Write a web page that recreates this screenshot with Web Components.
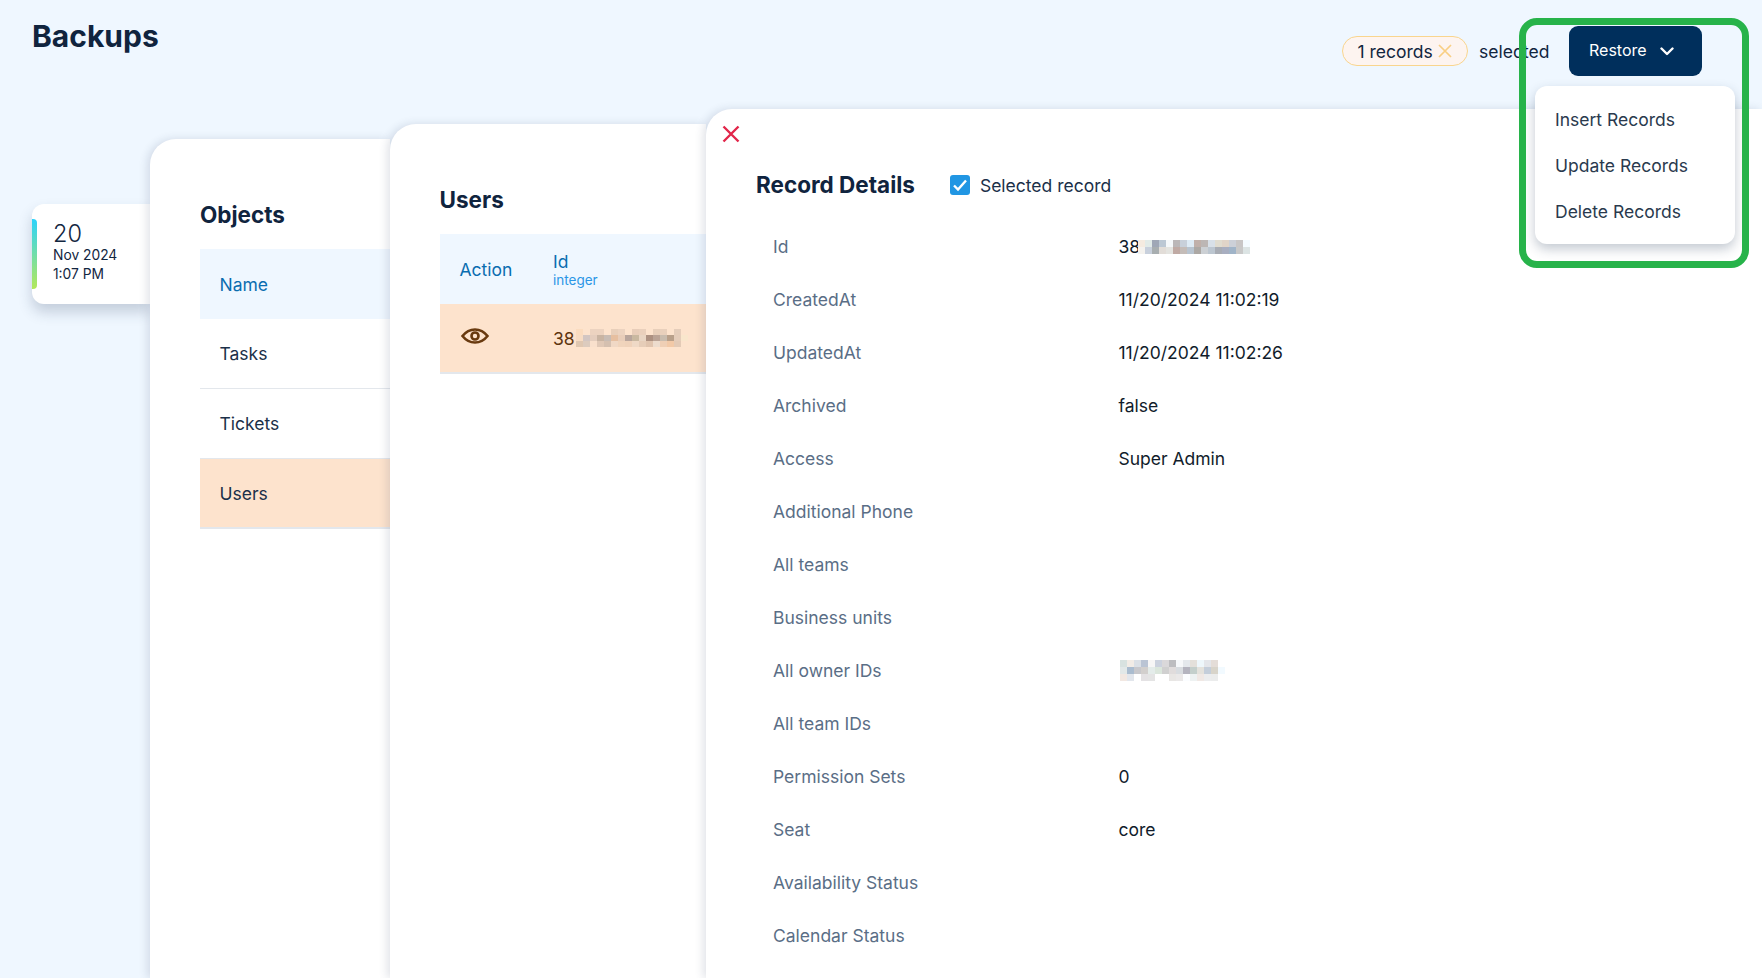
<!DOCTYPE html>
<html><head><meta charset="utf-8"><title>Backups</title>
<style>
html,body{margin:0;padding:0;height:100%}
body{background:#eff7ff;font-family:Inter,"Liberation Sans",sans-serif;color:#12263f;overflow:hidden}
</style></head><body>
<backups-page>
  <page-header slot="header"></page-header>
  <backup-date></backup-date>
  <objects-panel></objects-panel>
  <users-panel></users-panel>
  <record-panel></record-panel>
  <restore-menu></restore-menu>
</backups-page>
<script>
function def(name, html, setup){
  customElements.define(name, class extends HTMLElement{
    constructor(){super();this.attachShadow({mode:'open'}).innerHTML=html;}
    connectedCallback(){ if(setup) setup(this); }
  });
}
def('backups-page',`<style>
:host{display:block;position:relative;width:1762px;height:978px;overflow:hidden}
.main{display:flex;align-items:stretch;height:869px;padding-left:32px}
</style>
<slot name="header"></slot>
<div class="main"><slot></slot></div>`);

def('page-header',`<style>
:host{display:flex;box-sizing:border-box;height:109px;padding:16px 60px 0 32px;justify-content:space-between;align-items:flex-start}
h1{margin:0;font:700 30px/40px Inter,sans-serif;color:#10243e}
.right{display:flex;align-items:center;height:60px;margin-top:5px}
.pill{display:flex;align-items:center;box-sizing:border-box;height:30px;width:126px;padding-left:14.500px;border:1px solid #f9d58e;border-radius:15px;background:#fdf4f0;font-size:17.5px;color:#12263f}
.pill svg{margin-left:5.500px}
.sel{margin-left:11px;font-size:17.5px;color:#12263f;width:90px;margin-right:0}
.btn{display:flex;align-items:center;box-sizing:border-box;width:133px;height:50px;padding-left:20px;border-radius:9px;background:#002f5c;color:#fff;font-size:16px;}
.btn b{font-weight:400;position:relative;top:-1px}
.btn svg{margin-left:13px}
</style>
<h1>Backups</h1>
<div class="right">
 <span class="pill">1 records<svg width="14" height="14" viewBox="0 0 14 14" fill="none" stroke="#f9cf84" stroke-width="1.7"><path d="M1 1l12 12M13 1L1 13"/></svg></span>
 <span class="sel">selected</span>
 <span class="btn"><b>Restore</b><svg width="14" height="9" viewBox="0 0 14 9" fill="none" stroke="#fff" stroke-width="2.4" stroke-linecap="round" stroke-linejoin="round"><path d="M1.5 1.5L7 7l5.500-5.500"/></svg></span>
</div>`);

def('backup-date',`<style>
:host{display:block;box-sizing:border-box;position:relative;width:118px;height:100px;margin-top:95px;padding:18px 0 0 21px;background:#fff;border-radius:12px 0 0 12px;box-shadow:0 8px 14px rgba(40,60,90,.22);overflow:visible}
.bar{position:absolute;left:0;top:15px;width:5px;height:70px;border-radius:0 4px 4px 0;background:linear-gradient(#2cd3fb,#b3e85a)}
.d{font-size:23.500px;line-height:24px;color:#12263f;font-weight:300}
.s{font-size:13.800px;line-height:18.500px;color:#12263f}
</style>
<div class="bar"></div><div class="d">20</div><div class="s">Nov 2024</div><div class="s">1:07 PM</div>`);

def('objects-panel',`<style>
:host{display:block;box-sizing:border-box;position:relative;width:240px;margin-top:30px;padding:50px 0 0 50px;background:#fff;border-radius:26px 0 0 0;box-shadow:-3px 0 8px rgba(40,60,90,.14)}
h2{margin:0 0 18px;font:700 22.500px/52px Inter,sans-serif;color:#10243e;height:42px}
.r{box-sizing:border-box;height:70px;display:flex;align-items:center;padding-left:19.500px;font-size:17.5px;color:#1b3049;border-bottom:1px solid #e3e7ec}
.r:first-of-type{background:#eff7ff;color:#0a6db0;border:0}
.r.tick{height:69px;border:0}
.r.last{height:71px;background:#fde3cd;border-top:1px solid #e3e7ec;border-bottom:2px solid #e3e7ec}
</style>
<h2>Objects</h2>
<div class="r">Name</div><div class="r">Tasks</div><div class="r tick">Tickets</div><div class="r last">Users</div>`);

def('pixel-mosaic',`<style>
:host{display:inline-grid;grid-auto-rows:var(--h,7px);grid-auto-columns:7px;vertical-align:top}
i{display:block}
</style><div id="g" style="display:contents"></div>`, el=>{
  const g=el.shadowRoot.getElementById('g');
  el.getAttribute('data').split('|').forEach((row,y)=>row.trim().split(/\s+/).forEach((c,x)=>{
    const i=document.createElement('i');
    i.style.gridArea=(y+1)+'/'+(x+1);
    if(c!=='-') i.style.background='#'+c;
    g.appendChild(i);
  }));
});

def('users-panel',`<style>
:host{display:block;box-sizing:border-box;position:relative;width:316px;margin-top:15px;padding:50px 0 0 50px;background:#fff;border-radius:26px 0 0 0;box-shadow:-3px 0 8px rgba(40,60,90,.14)}
h2{margin:0;font:700 22.500px/52px Inter,sans-serif;color:#10243e;height:60px;margin-left:-.5px}
.h,.b{display:flex;align-items:center;box-sizing:border-box}
.h{height:70px;background:#eff7ff;color:#0a6db0;font-size:17.5px}
.b{height:70px;background:#fde3cd;color:#5e3510;border-bottom:2px solid #e3e7ec;font-size:17.5px}
.c1{width:113px;padding-left:19.500px;box-sizing:border-box}
.id{line-height:20px;padding-top:2px}.id small{display:block;font-size:13.500px;line-height:17px;color:#2b96e6}
.val{display:flex;align-items:center}
pixel-mosaic{--h:6.300px;margin-left:1px}
</style>
<h2>Users</h2>
<div class="h"><div class="c1">Action</div><div class="id">Id<small>integer</small></div></div>
<div class="b"><div class="c1" style="height:30px"><svg width="30" height="20" viewBox="0 0 30 20" fill="none" stroke="#693a0f" style="display:block;margin-top:3px"><path stroke-width="2.600" d="M2.500 10C6 5.500 10 3.500 15 3.500S24 5.500 27.500 10C24 14.500 20 16.500 15 16.500S6 14.500 2.500 10z"/><circle cx="15" cy="10" r="3.500" stroke-width="2.600"/></svg></div>
<div class="val">38<pixel-mosaic data="fbdcbf - ecd3c0 ecd3c0 - e8cfba ecd3c0 - e8cdb9 ead0bc - e8cfba e9d0bc - e5cdba|f8dcc3 d3c6c2 e4cdbd c9b4a2 c8bcb4 e6bfa0 e8cdb9 b8a59c c9b8a0 e9d5c3 ad9181 bba496 c9bcae b9a08a e5cdba f9e6cc|dfc7b1 dccbbe f9e0cc e0c8b6 d5c0b0 f0d8c5 f0d4bc efd2ba efd9c6 e6cdb8 e0c4ae eddccd efcfb5 f2c9a7 e3cab6"></pixel-mosaic></div></div>`);

def('detail-row',`<style>
:host{display:grid;grid-template-columns:345.500px 1fr;height:53px;align-items:center;font-size:17.5px}
.l{color:#5a6e86}
.v{color:#111c2b;display:flex;align-items:center}
</style><div class="l"><slot name="l"></slot></div><div class="v"><slot></slot></div>`);

def('record-panel',`<style>
:host{display:block;box-sizing:border-box;position:relative;flex:1;padding:0 0 0 50px;background:#fff;border-radius:26px 0 0 0;box-shadow:-3px 0 8px rgba(40,60,90,.14)}
.x{display:block;margin:16px 0 0 -34px}
.t{display:flex;align-items:center;height:40px;margin-top:22px;margin-bottom:22px}
h2{margin:0;font:700 22.500px/40px Inter,sans-serif;color:#10243e}
.cb{display:flex;margin-left:35px;width:20px;height:20px;background:#2196e3;border-radius:3px;align-items:center;justify-content:center}
.ct{margin-left:10px;font-size:17.5px;color:#1b3049}
.rows{padding-left:17px;margin-top:-7px}
pixel-mosaic{margin-left:-2px}
pixel-mosaic.o{margin-left:1px}
</style>
<svg class="x" width="18" height="18" viewBox="0 0 18 18" fill="none" stroke="#e2264a" stroke-width="2.400"><path d="M1.500 1.500l15 15M16.500 1.500l-15 15"/></svg>
<div class="t"><h2>Record Details</h2><span class="cb"><svg width="16" height="14" viewBox="0 0 16 14" fill="none" stroke="#fff" stroke-width="2.400"><path d="M2 7.500l4 4L14 2.500"/></svg></span><span class="ct">Selected record</span></div>
<div class="rows">
<detail-row><span slot="l">Id</span>38<pixel-mosaic style="--h:7px" data="f5ebe0 e2ebe8 9fa7b6 bcc8d4 f5f8fa bbb7b8 c8d0da deebf5 c0b0aa bcb6b4 d8e0e8 e0dcd0 e0d4c8 ccd0d8 c8c6c6 f4fbff|f4f2ee c8d0dc a8aeb0 e2ddd8 e4e4e0 c0aaa4 c4bcb8 b8c4d0 aca8a4 ccd0d4 bcc6d0 a8acb4 a8aec0 a0b4c8 c8c8c8 dce4e4"></pixel-mosaic></detail-row>
<detail-row><span slot="l">CreatedAt</span>11/20/2024 11:02:19</detail-row>
<detail-row><span slot="l">UpdatedAt</span>11/20/2024 11:02:26</detail-row>
<detail-row><span slot="l">Archived</span>false</detail-row>
<detail-row><span slot="l">Access</span>Super Admin</detail-row>
<detail-row><span slot="l">Additional Phone</span></detail-row>
<detail-row><span slot="l">All teams</span></detail-row>
<detail-row><span slot="l">Business units</span></detail-row>
<detail-row><span slot="l">All owner IDs</span><pixel-mosaic class="o" data="d8e2e0 f2ece6 dbe0e6 bac4d4 f7f6f6 ccd2de dad8da bdbdc0 f6f8fa e4e8ec e4e0da eef7fb e4e6ea e4ddd8|e2e8e8 aabccf c8c8cc d2cfcd e4ecea dbe6dc d0d0d0 e0dcdc d8dce0 b4b4bf c4cfcb e4e2dc c4ceda d8d4ca f2faff|f2e8e2 e2e6ec - e4e2e4 e4e4e4 - - e8e6e4 eae8e8 fbfdff eef2f2 f0e8e4 ecedee ebecec"></pixel-mosaic></detail-row>
<detail-row><span slot="l">All team IDs</span></detail-row>
<detail-row><span slot="l">Permission Sets</span>0</detail-row>
<detail-row><span slot="l">Seat</span>core</detail-row>
<detail-row><span slot="l">Availability Status</span></detail-row>
<detail-row><span slot="l">Calendar Status</span></detail-row>
</div>`);

def('restore-menu',`<style>
:host{display:block}
.frame{position:absolute;left:1519px;top:18px;width:216px;height:236px;border:7px solid #27b34a;border-radius:18px;pointer-events:none}
.menu{position:absolute;left:1535px;top:86px;width:200px;height:158px;box-sizing:border-box;padding:10px 0;background:#fff;border-radius:12px;box-shadow:0 5px 12px rgba(40,60,90,.28)}
.i{height:46px;display:flex;align-items:center;padding-left:20px;font-size:17.5px;color:#2a3a4e}
</style>
<div class="menu"><div class="i">Insert Records</div><div class="i">Update Records</div><div class="i">Delete Records</div></div>
<div class="frame"></div>`);
</script>
</body></html>
